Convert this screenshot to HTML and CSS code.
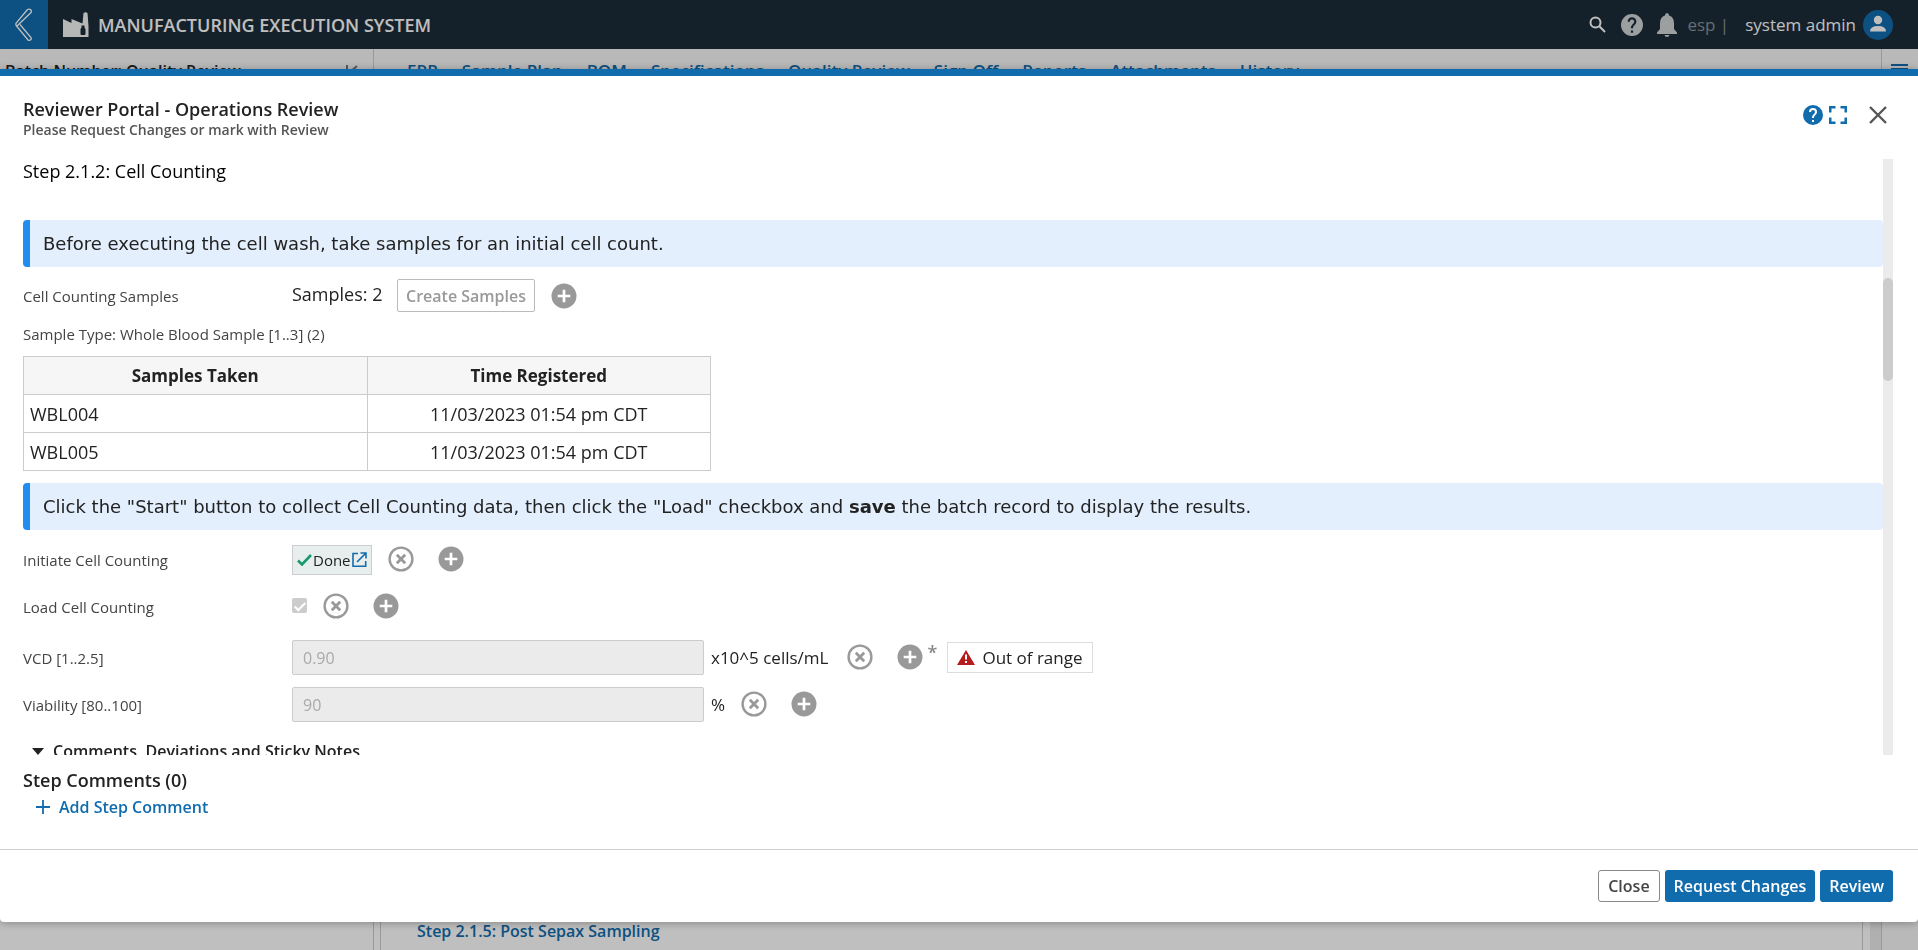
FILE: index.html
```html
<!DOCTYPE html>
<html lang="en">
<head>
<meta charset="utf-8">
<title>Manufacturing Execution System</title>
<link rel="stylesheet" href="styles.css">
</head>
<body>
<svg class="defs" aria-hidden="true">
  <symbol id="plus" viewBox="0 0 26 26"><circle cx="13" cy="13" r="12.5" fill="#999"/><path d="M13 6.700v12.600M6.700 13h12.600" stroke="#fff" stroke-width="2.700"/></symbol>
  <symbol id="clear" viewBox="0 0 26 26"><circle cx="13" cy="13" r="11.4" fill="none" stroke="#999" stroke-width="2.4"/><path d="M8.800 8.800l8.400 8.400M17.200 8.800l-8.400 8.400" stroke="#999" stroke-width="2.8"/></symbol>
  <symbol id="help" viewBox="2 2 20 20"><path fill="currentColor" d="M12 2a10 10 0 1 0 0 20 10 10 0 0 0 0-20zm1 17h-2v-2h2v2zm2.07-7.75-.9.92C13.45 12.9 13 13.5 13 15h-2v-.5c0-1.1.45-2.1 1.17-2.83l1.24-1.26c.37-.36.59-.86.59-1.41a2 2 0 1 0-4 0H8a4 4 0 1 1 8 0c0 .88-.36 1.68-.93 2.25z"/></symbol>
</svg>
<div class="app">
  <header class="topbar">
    <button class="back" aria-label="Back"><svg width="18" height="34" viewBox="0 0 18 34"><path d="M12.500 1.500 1.200 15Q.5 16.500 1.200 17.500L13 32q1.500 1 3-.500.500-1 0-2L5 16.500M1.500 18.500 16 4.500q.800-1 0-2.500-1.500-1.500-3.500-.500" fill="none" stroke="#fff" stroke-width="1.300"/></svg></button>
    <svg class="factory" width="26" height="26" viewBox="0 0 26 26"><path fill="#fff" fill-rule="evenodd" d="M0 7 8.500 11V7L19.500 11.500 20.500 1Q22.500-.5 24.500 1L25.500 14V25H0zM17.500 22q0 1 1 1h3q1 0 1-1v-5l-1-1.500v-2h-3v2l-1 1.500z"/></svg>
    <h1 class="brand">MANUFACTURING EXECUTION SYSTEM</h1>
    <nav class="tools">
      <button aria-label="Search"><svg width="17" height="17" viewBox="0 0 17 17" fill="none" stroke="#fff" stroke-width="2"><circle cx="6.500" cy="6.500" r="5"/><path d="M10.300 10.300 16 16"/></svg></button>
      <button class="dim" aria-label="Help"><svg width="22" height="22"><use href="#help"/></svg></button>
      <button class="dim bell" aria-label="Notifications"><svg width="20" height="24" viewBox="0 0 20 24"><path fill="currentColor" d="M10 0q2 0 2 2.500Q17 4 17 10v6l3 3.500V21H0v-1.500L3 16v-6q0-6 5-7.500Q8 0 10 0zM7.500 22h5q-.5 2-2.500 2t-2.500-2z"/></svg></button>
      <span class="tenant">esp |</span>
      <span class="user">system admin</span>
      <svg width="30" height="30" viewBox="0 0 30 30"><circle cx="15" cy="15" r="15" fill="#116cae"/><circle cx="15" cy="10" r="4.200" fill="#fff"/><path d="M7 21.500q0-5.500 8-5.500t8 5.500z" fill="#fff"/></svg>
    </nav>
  </header>
  <div class="subbar">
    <div class="batch"><span>Batch Number: Quality Review</span>
      <svg width="14" height="14" viewBox="0 0 14 14" fill="none" stroke="#777" stroke-width="2"><path d="M2 0v14M12 1 5 7l7 6"/></svg></div>
    <nav class="tabs"><a href="#">ERP</a><a href="#">Sample Plan</a><a href="#">BOM</a><a href="#">Specifications</a><a href="#">Quality Review</a><a href="#">Sign Off</a><a href="#">Reports</a><a href="#">Attachments</a><a href="#">History</a></nav>
    <div class="menu"><svg width="17" height="12" viewBox="0 0 17 12" stroke="#116cae" stroke-width="2"><path d="M0 1h17M0 5h17M0 9h17"/></svg></div>
  </div>
  <main class="page">
    <div class="side"></div>
    <div class="content"><a href="#">Step 2.1.5: Post Sepax Sampling</a></div>
    <div class="gutter"></div>
    <div class="rail"></div>
  </main>
</div>
<div class="overlay"></div>

<section class="modal" role="dialog" aria-labelledby="dialog-title">
  <header class="modal-head">
    <div><h2 id="dialog-title">Reviewer Portal - Operations Review</h2><p>Please Request Changes or mark with Review</p></div>
    <div class="window-tools">
      <button aria-label="Help"><svg width="20" height="20"><use href="#help"/></svg></button>
      <button aria-label="Full screen"><svg width="18" height="18" viewBox="0 0 18 18" fill="none" stroke="currentColor" stroke-width="2.500"><path d="M1.250 6.500V1.250H6.500M11.500 1.250h5.250V6.500M16.750 11.500v5.250H11.500M6.500 16.750H1.250V11.500"/></svg></button>
      <button class="dismiss" aria-label="Close dialog"><svg width="18" height="18" viewBox="0 0 18 18" stroke="#555" stroke-width="2.400"><path d="M1 1l16 16M17 1 1 17"/></svg></button>
    </div>
  </header>
  <div class="scroller">
    <div class="record">
      <h3>Step 2.1.2: Cell Counting</h3>
      <p class="callout">Before executing the cell wash, take samples for an initial cell count.</p>
      <div class="field samples"><span class="label">Cell Counting Samples</span><span class="count">Samples: 2</span><button class="create" disabled>Create Samples</button><button class="icon" aria-label="Add"><svg width="26" height="26"><use href="#plus"/></svg></button></div>
      <p class="label type">Sample Type: Whole Blood Sample [1..3] (2)</p>
      <table>
        <thead><tr><th>Samples Taken</th><th>Time Registered</th></tr></thead>
        <tbody><tr><td>WBL004</td><td>11/03/2023 01:54 pm CDT</td></tr><tr><td>WBL005</td><td>11/03/2023 01:54 pm CDT</td></tr></tbody>
      </table>
      <p class="callout">Click the "Start" button to collect Cell Counting data, then click the "Load" checkbox and <b>save</b> the batch record to display the results.</p>
      <div class="field initiate"><span class="label">Initiate Cell Counting</span>
        <button class="done"><svg width="15" height="12" viewBox="0 0 15 12"><path d="M1 6.500 5 10.500 14 1" fill="none" stroke="#199a6c" stroke-width="2.600"/></svg>Done<svg width="15" height="15" viewBox="0 0 15 15" fill="none" stroke="#116cae" stroke-width="1.600"><path d="M6 1.500H1v12.700h12.700V9M8.500 1h5.500v5.500M14 1 5 10"/></svg></button>
        <span class="actions"><button class="icon" aria-label="Clear"><svg width="26" height="26"><use href="#clear"/></svg></button><button class="icon" aria-label="Add"><svg width="26" height="26"><use href="#plus"/></svg></button></span></div>
      <div class="field load"><label class="label" for="load">Load Cell Counting</label><input type="checkbox" id="load" checked disabled>
        <span class="actions"><button class="icon" aria-label="Clear"><svg width="26" height="26"><use href="#clear"/></svg></button><button class="icon" aria-label="Add"><svg width="26" height="26"><use href="#plus"/></svg></button></span></div>
      <div class="field vcd"><label class="label" for="vcd">VCD [1..2.5]</label><input class="value" type="text" id="vcd" value="0.90" disabled><span class="unit">x10^5 cells/mL</span>
        <span class="actions"><button class="icon" aria-label="Clear"><svg width="26" height="26"><use href="#clear"/></svg></button><button class="icon" aria-label="Add"><svg width="26" height="26"><use href="#plus"/></svg></button></span><span class="star">*</span>
        <span class="alert"><svg width="18" height="15" viewBox="0 0 18 15"><path d="M9 0 18 15H0z" fill="#b71c1c"/><path d="M9 4.500v5M9 11v2" stroke="#fff" stroke-width="2"/></svg>Out of range</span></div>
      <div class="field viability"><label class="label" for="viability">Viability [80..100]</label><input class="value" type="text" id="viability" value="90" disabled><span class="unit">%</span>
        <span class="actions"><button class="icon" aria-label="Clear"><svg width="26" height="26"><use href="#clear"/></svg></button><button class="icon" aria-label="Add"><svg width="26" height="26"><use href="#plus"/></svg></button></span></div>
      <button class="notes"><svg width="12" height="7" viewBox="0 0 12 7"><path d="M0 0h12L6 7z" fill="#222"/></svg>Comments, Deviations and Sticky Notes</button>
    </div>
    <div class="track"><div class="thumb"></div></div>
  </div>
  <div class="comments">
    <h3>Step Comments (0)</h3>
    <button class="add"><svg width="14" height="14" viewBox="0 0 14 14" stroke="#116cae" stroke-width="1.800"><path d="M7 0v14M0 7h14"/></svg>Add Step Comment</button>
  </div>
  <footer class="modal-foot"><button class="plain">Close</button><button class="primary">Request Changes</button><button class="primary">Review</button></footer>
</section>
</body>
</html>
```
FILE: styles.css
```css
* { box-sizing: border-box; }
body { margin: 0; height: 100vh; overflow: hidden; font-family: "Open Sans", "Noto Sans", sans-serif; font-size: 16px; line-height: 24px; color: #222; }
h1, h2, h3, p { margin: 0; }
button { font: inherit; color: inherit; padding: 0; border: 0; background: none; display: inline-flex; align-items: center; }
svg { display: block; flex: none; }
a { color: #116cae; text-decoration: none; font-weight: 600; }
.defs { position: absolute; width: 0; height: 0; }

/* Page behind the dialog */
.app { height: 100vh; display: flex; flex-direction: column; }
.topbar { height: 49px; flex: none; display: flex; align-items: center; background: #1c2d39; color: #fff; padding-right: 25px; }
.back { width: 48px; height: 49px; justify-content: center; background: #116cae; }
.factory { margin-left: 15px; opacity: 0.95; }
.brand { margin-left: 9px; font-size: 18px; font-weight: 600; }
.tools { margin-left: auto; display: flex; align-items: center; font-size: 17px; }
.dim { color: #d0d4d6; margin-left: 15px; }
.bell { margin: 0 10px 0 14px; }
.tenant { color: #8a9298; margin-right: 16px; }
.user { margin-right: 7px; }
.subbar { height: 57px; flex: none; display: flex; background: #f7f7f7; }
.batch { width: 374px; padding: 10px 14px 0 5px; display: flex; justify-content: space-between; border-right: 1px solid #ccc; font-weight: 600; }
.batch svg { margin-top: 6px; }
.tabs { flex: 1; display: flex; gap: 24px; padding: 10px 0 0 33px; font-size: 17px; }
.menu { width: 37px; padding: 15px 0 0 9px; border-left: 1px solid #ccc; }
.page { flex: 1; display: flex; background: #fff; }
.side { width: 374px; border-right: 1px solid #ccc; }
.content { flex: 1; margin-left: 6px; padding: 0 0 7px 36px; border: solid #ccc; border-width: 0 1px; display: flex; align-items: flex-end; }
.gutter { width: 18px; border-left: 7px solid #fff; background: #ebebeb; }
.rail { width: 37px; background: #f7f7f7; border-left: 1px solid #ccc; }
.overlay { position: fixed; inset: 0; background: rgba(0, 0, 0, 0.25); }

/* Dialog */
.modal { position: fixed; inset: 69px 0 28px; display: flex; flex-direction: column; background: #fff; border-top: 7px solid #116cae; border-radius: 0 0 4px 4px; box-shadow: 0 1px 8px rgba(0, 0, 0, 0.3); }
.modal-head { height: 83px; flex: none; display: flex; justify-content: space-between; padding: 21px 31px 0 23px; }
.modal-head h2 { font-size: 18px; font-weight: 600; }
.modal-head p { font-size: 14px; line-height: 18px; font-weight: 600; color: #555; }
.window-tools { display: flex; align-items: center; height: 36px; color: #116cae; gap: 6px; }
.dismiss { margin-left: 16px; }
.scroller { flex: 1; min-height: 0; display: flex; margin: 0 25px 0 23px; overflow: hidden; }
.record { flex: 1; overflow: hidden; font-size: 18px; }
.record h3 { font-size: 18px; font-weight: 400; color: #000; margin-bottom: 37px; }
.callout { border-left: 7px solid #1f8ef0; border-radius: 4px; background: #e3effc; padding: 12px 13px 11px; font: 18px/24px "DejaVu Sans", sans-serif; }
.field { display: flex; align-items: center; }
.label { width: 269px; font-size: 15px; color: #444; }
.samples { padding-top: 12px; }
.count { width: 105px; padding-bottom: 4px; }
.create { height: 33px; padding: 0 8px; border: 1px solid #bbb; border-radius: 2px; color: #999; font-size: 16px; font-weight: 600; margin-right: 16px; }
.type { width: auto; margin: 10px 0; }
table { width: 688px; table-layout: fixed; border-collapse: collapse; margin-bottom: 12px; }
th, td { height: 38px; padding: 0 6px; border: 1px solid #ccc; }
th { background: #f6f6f6; font-weight: 700; font-size: 17px; }
td + td { text-align: center; }
.initiate { height: 59px; }
.done { height: 30px; padding: 0 4px; border: 1px solid #ccc; background: #e8eeee; font-size: 15px; gap: 1px; }
.actions { display: flex; gap: 24px; margin-left: 16px; padding-bottom: 2px; }
.load { height: 36px; }
.load input { appearance: none; width: 15px; height: 15px; margin: 0 0 4px; border-radius: 2px; background: #ccc; display: grid; place-items: center; }
.load input::after { content: ""; width: 4px; height: 9px; border: solid #fff; border-width: 0 2px 2px 0; transform: rotate(45deg); }
.vcd { height: 65px; }
.vcd .actions { margin-left: 19px; }
.value { width: 412px; height: 35px; padding: 0 10px; border: 1px solid #ccc; border-radius: 2px; background: #ebebeb; font: inherit; font-size: 16px; color: #aaa; }
.unit { margin-left: 7px; font-size: 17px; }
.star { width: 12px; margin: 0 8px 12px 4px; color: #888; font-size: 18px; font-weight: 600; }
.alert { display: flex; align-items: center; gap: 7px; height: 31px; padding: 0 9px; border: 1px solid #ddd; font-size: 17px; }
.viability { height: 29px; }
.notes { margin: 20px 0 0 9px; gap: 9px; font-size: 16px; font-weight: 600; }
.track { width: 10px; background: #ebebeb; padding-top: 119px; }
.thumb { height: 103px; border-radius: 5px; background: #ccc; }
.comments { height: 94px; flex: none; padding: 13px 23px; }
.comments h3 { font-size: 18px; font-weight: 600; }
.add { margin: 3px 0 0 13px; gap: 9px; color: #116cae; font-weight: 600; }
.modal-foot { flex: none; display: flex; justify-content: flex-end; gap: 5px; padding: 20px 25px; border-top: 1px solid #d0d0d0; font-weight: 600; }
.modal-foot button { height: 32px; padding: 0 9px; border-radius: 3px; }
.plain { border: 1px solid #888; color: #444; }
.primary { background: #116cae; color: #fff; }
```
